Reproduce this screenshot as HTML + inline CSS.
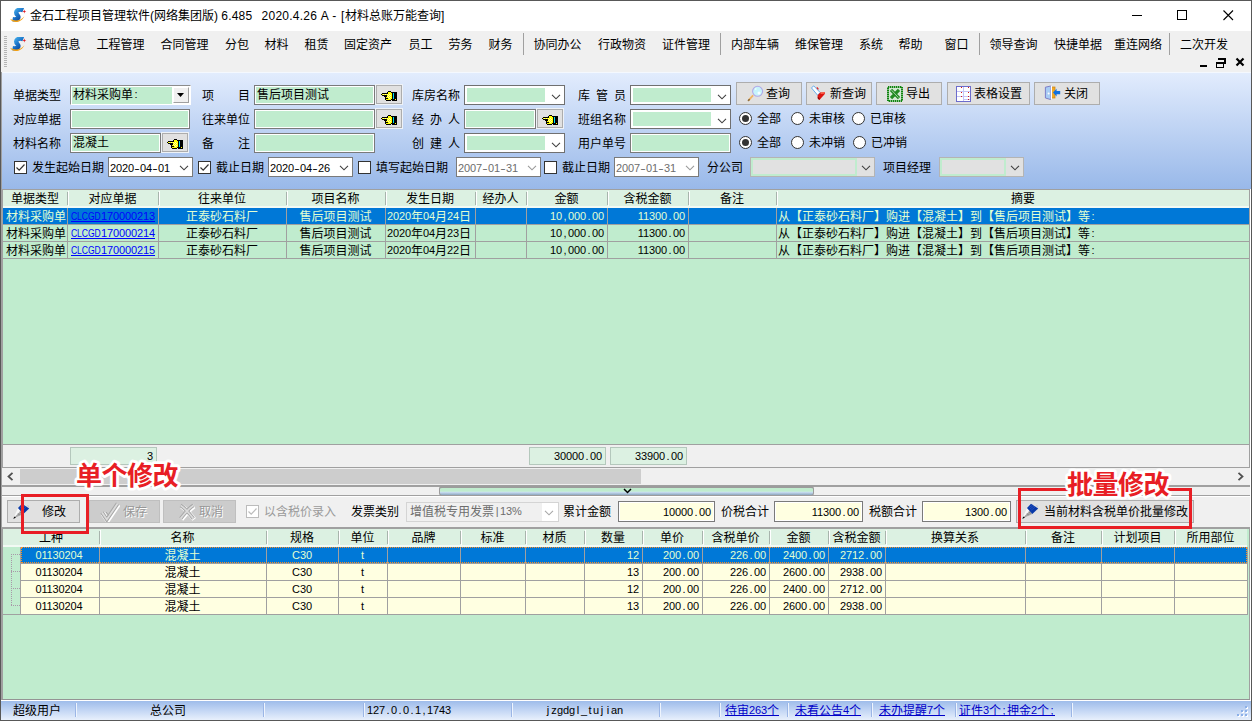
<!DOCTYPE html><html lang="zh-CN"><head><meta charset="utf-8"><title>金石工程项目管理软件</title><style>
html,body{margin:0;padding:0}
body{width:1252px;height:721px;overflow:hidden;position:relative;background:#f0f0f0;
 font-family:"Liberation Sans","Noto Sans CJK SC",sans-serif;font-size:12px;color:#000;line-height:14px}
div,span,a,svg{position:absolute;white-space:nowrap;box-sizing:border-box}
span.i{position:static}
.n{font-size:11px;letter-spacing:-.12px}
span.u{position:relative;top:-1px}
span.hy{display:inline-block;width:6px;text-align:center;position:static;transform:scaleX(1.5)}
span.p{display:inline-block;width:6px;text-align:center;position:static}
span.cw{display:inline-block;position:relative;height:12px;vertical-align:top}
span.cw>span{left:0;top:0;transform:scaleX(.78);transform-origin:0 0}
.t{height:14px;line-height:14px}
.c{text-align:center}
.r{text-align:right}
.inp{background:#c0ecce;border:1px solid #7a7a7a;box-shadow:inset 1px 1px 0 #fff, inset -1px -1px 0 #fff}
.btn{background:#e1e1e1;border:1px solid #adadad}
.hb{background:#e1e1e1;border:1px solid #adadad;box-shadow:0 0 0 1px #eef2f7}
.lnk{color:#0000ff;text-decoration:underline}
</style></head><body>
<div class="" style="left:0px;top:0px;width:1252px;height:31px;background:#fff"></div>
<div class="t" style="left:30px;top:9px;">金石工程项目管理软件(网络集团版) <span class="i" style="letter-spacing:.2px">6.485</span>&nbsp; <span class="i" style="letter-spacing:.25px;margin-left:2.5px">2020.4.26 A</span> - <span class="i" style="margin-left:1.2px">[</span><span class="i" style="margin-left:.7px">材料总账万能查询]</span></div>
<svg style="left:1126px;top:5px" width="120" height="22" viewBox="0 0 120 22"><g stroke="#000" stroke-width="1" fill="none" shape-rendering="crispEdges"><path d="M6 10.5H16"/><rect x="51.5" y="5.5" width="9" height="9"/></g><path d="M97.5 5.5L107 15M107 5.5L97.5 15" stroke="#000" stroke-width="1.1" fill="none"/></svg>
<svg style="left:9.5px;top:7.5px" width="17" height="16" viewBox="0 0 17 16"><defs><linearGradient id="lg1" x1="0" y1="0" x2="1" y2="1"><stop offset="0" stop-color="#48b4ee"/><stop offset=".5" stop-color="#1c74c8"/><stop offset="1" stop-color="#0c3c8c"/></linearGradient></defs><path d="M13.2 2.2C8.5 0.2 4 3.6 7.4 7C10.2 9.8 7 12 2.6 11.2" fill="none" stroke="url(#lg1)" stroke-width="4.4"/><path d="M.2 10.8C2.5 15.8 11.5 15 14.4 8.2C11.2 12.6 5 13.8 .2 10.8Z" fill="#f5a010"/><path d="M14.3 1.6l.5 1.5 1.5.5-1.5.5-.5 1.5-.5-1.5-1.5-.5 1.5-.5z" fill="#e0202a"/></svg>
<div class="" style="left:0px;top:31px;width:1252px;height:42px;background:#f0f0f0"></div>
<div class="" style="left:4px;top:36px;width:3px;height:32px;background:repeating-linear-gradient(to bottom,#b4b4b4 0,#b4b4b4 1px,#f0f0f0 1px,#f0f0f0 2px)"></div>
<svg style="left:9.5px;top:36.5px" width="17" height="16" viewBox="0 0 17 16"><defs><linearGradient id="lg2" x1="0" y1="0" x2="1" y2="1"><stop offset="0" stop-color="#48b4ee"/><stop offset=".5" stop-color="#1c74c8"/><stop offset="1" stop-color="#0c3c8c"/></linearGradient></defs><path d="M13.2 2.2C8.5 0.2 4 3.6 7.4 7C10.2 9.8 7 12 2.6 11.2" fill="none" stroke="url(#lg2)" stroke-width="4.4"/><path d="M.2 10.8C2.5 15.8 11.5 15 14.4 8.2C11.2 12.6 5 13.8 .2 10.8Z" fill="#f5a010"/><path d="M14.3 1.6l.5 1.5 1.5.5-1.5.5-.5 1.5-.5-1.5-1.5-.5 1.5-.5z" fill="#e0202a"/></svg>
<div class="t" style="left:32.5px;top:38px;">基础信息</div>
<div class="t" style="left:96.5px;top:38px;">工程管理</div>
<div class="t" style="left:160.5px;top:38px;">合同管理</div>
<div class="t" style="left:225px;top:38px;">分包</div>
<div class="t" style="left:264.5px;top:38px;">材料</div>
<div class="t" style="left:304.5px;top:38px;">租赁</div>
<div class="t" style="left:344px;top:38px;">固定资产</div>
<div class="t" style="left:408.5px;top:38px;">员工</div>
<div class="t" style="left:448.5px;top:38px;">劳务</div>
<div class="t" style="left:488.5px;top:38px;">财务</div>
<div class="t" style="left:533.5px;top:38px;">协同办公</div>
<div class="t" style="left:598px;top:38px;">行政物资</div>
<div class="t" style="left:662px;top:38px;">证件管理</div>
<div class="t" style="left:731px;top:38px;">内部车辆</div>
<div class="t" style="left:795px;top:38px;">维保管理</div>
<div class="t" style="left:859px;top:38px;">系统</div>
<div class="t" style="left:898.5px;top:38px;">帮助</div>
<div class="t" style="left:944.5px;top:38px;">窗口</div>
<div class="t" style="left:989.5px;top:38px;">领导查询</div>
<div class="t" style="left:1054px;top:38px;">快捷单据</div>
<div class="t" style="left:1114px;top:38px;">重连网络</div>
<div class="t" style="left:1180px;top:38px;">二次开发</div>
<div class="" style="left:523px;top:33px;width:1px;height:22px;background:#a0a0a0"></div>
<div class="" style="left:720px;top:33px;width:1px;height:22px;background:#a0a0a0"></div>
<div class="" style="left:979px;top:33px;width:1px;height:22px;background:#a0a0a0"></div>
<div class="" style="left:1169px;top:33px;width:1px;height:22px;background:#a0a0a0"></div>
<svg style="left:1196px;top:56px" width="52" height="14" viewBox="0 0 52 14"><g fill="none" stroke="#000" shape-rendering="crispEdges"><path d="M4 10H11" stroke-width="2"/><path d="M22 3H29V8" stroke-width="2"/><rect x="20" y="6" width="7" height="5" stroke-width="1"/><path d="M20 6.5H27" stroke-width="2"/></g><path d="M40.5 2.5L47.5 9.5M47.5 2.5L40.5 9.5" stroke="#000" stroke-width="2.2" fill="none"/></svg>
<div class="" style="left:2px;top:72px;width:1249px;height:118px;background:linear-gradient(to bottom,#e2ecfd 0,#98b8e9 100%);border-top:1px solid #f4f8fe"></div>
<div class="t" style="left:13px;top:89px;">单据类型</div>
<div class="t" style="left:13px;top:113px;">对应单据</div>
<div class="t" style="left:13px;top:137px;">材料名称</div>
<div class="t" style="left:202px;top:89px;">项&#12288;&#12288;目</div>
<div class="t" style="left:202px;top:113px;">往来单位</div>
<div class="t" style="left:202px;top:137px;">备&#12288;&#12288;注</div>
<div class="t" style="left:412px;top:89px;">库房名称</div>
<div class="t" style="left:412px;top:113px;">经<span class="p"> </span>办<span class="p"> </span>人</div>
<div class="t" style="left:412px;top:137px;">创<span class="p"> </span>建<span class="p"> </span>人</div>
<div class="t" style="left:578px;top:89px;">库<span class="p"> </span>管<span class="p"> </span>员</div>
<div class="t" style="left:578px;top:113px;">班组名称</div>
<div class="t" style="left:578px;top:137px;">用户单号</div>
<div class="" style="left:70px;top:85px;width:121px;height:20px;background:#c0ecce;border:1px solid;border-color:#8c8c8c #fff #fff #8c8c8c;box-shadow:inset 1px 1px 0 #fff"></div>
<div class="t" style="left:73px;top:88px;">材料采购单<span class="n u"><span class="p">:</span></span></div>
<div class="" style="left:172px;top:86px;width:18px;height:18px;background:#fff"></div>
<div class="" style="left:173px;top:87px;width:16px;height:16px;background:#f0f0f0;border:1px solid;border-color:#fff #a0a0a0 #a0a0a0 #fff"></div>
<svg style="left:177px;top:93px" width="7" height="4" viewBox="0 0 7 4"><path d="M0 0H7L3.5 4Z" fill="#000"/></svg>
<div class="inp" style="left:70px;top:109px;width:120px;height:20px;"></div>
<div class="inp" style="left:70px;top:133px;width:91px;height:20px;"></div>
<div class="t" style="left:73px;top:136px;">混凝土</div>
<div class="hb" style="left:162px;top:133px;width:26px;height:19px;"></div>
<svg style="left:167px;top:139px" width="16" height="10" viewBox="0 0 16 10" shape-rendering="crispEdges"><rect x="7" y="0" width="3" height="1" fill="#000"/><rect x="6" y="1" width="1" height="1" fill="#000"/><rect x="7" y="1" width="3" height="1" fill="#ffff00"/><rect x="10" y="1" width="6" height="1" fill="#000"/><rect x="1" y="2" width="6" height="1" fill="#000"/><rect x="7" y="2" width="4" height="1" fill="#ffff00"/><rect x="11" y="2" width="1" height="1" fill="#000"/><rect x="12" y="2" width="1" height="1" fill="#00e0f0"/><rect x="13" y="2" width="3" height="1" fill="#000"/><rect x="0" y="3" width="1" height="1" fill="#000"/><rect x="1" y="3" width="1" height="1" fill="#ffff00"/><rect x="2" y="3" width="1" height="1" fill="#ffffa0"/><rect x="3" y="3" width="1" height="1" fill="#ffff00"/><rect x="4" y="3" width="1" height="1" fill="#ffffa0"/><rect x="5" y="3" width="1" height="1" fill="#ffff00"/><rect x="6" y="3" width="1" height="1" fill="#ffffa0"/><rect x="7" y="3" width="1" height="1" fill="#ffff00"/><rect x="8" y="3" width="1" height="1" fill="#ffffa0"/><rect x="9" y="3" width="2" height="1" fill="#ffff00"/><rect x="11" y="3" width="1" height="1" fill="#000"/><rect x="12" y="3" width="1" height="1" fill="#00e0f0"/><rect x="13" y="3" width="3" height="1" fill="#000"/><rect x="1" y="4" width="5" height="1" fill="#000"/><rect x="6" y="4" width="1" height="1" fill="#ffff00"/><rect x="7" y="4" width="1" height="1" fill="#ffffa0"/><rect x="8" y="4" width="1" height="1" fill="#ffff00"/><rect x="9" y="4" width="1" height="1" fill="#ffffa0"/><rect x="10" y="4" width="1" height="1" fill="#ffff00"/><rect x="11" y="4" width="1" height="1" fill="#000"/><rect x="12" y="4" width="1" height="1" fill="#00e0f0"/><rect x="13" y="4" width="3" height="1" fill="#000"/><rect x="3" y="5" width="3" height="1" fill="#000"/><rect x="6" y="5" width="1" height="1" fill="#ffffa0"/><rect x="7" y="5" width="1" height="1" fill="#ffff00"/><rect x="8" y="5" width="1" height="1" fill="#ffffa0"/><rect x="9" y="5" width="2" height="1" fill="#ffff00"/><rect x="11" y="5" width="1" height="1" fill="#000"/><rect x="12" y="5" width="1" height="1" fill="#00e0f0"/><rect x="13" y="5" width="3" height="1" fill="#000"/><rect x="4" y="6" width="1" height="1" fill="#000"/><rect x="5" y="6" width="2" height="1" fill="#ffff00"/><rect x="7" y="6" width="1" height="1" fill="#ffffa0"/><rect x="8" y="6" width="1" height="1" fill="#ffff00"/><rect x="9" y="6" width="1" height="1" fill="#ffffa0"/><rect x="10" y="6" width="1" height="1" fill="#ffff00"/><rect x="11" y="6" width="1" height="1" fill="#000"/><rect x="12" y="6" width="1" height="1" fill="#00e0f0"/><rect x="13" y="6" width="3" height="1" fill="#000"/><rect x="4" y="7" width="3" height="1" fill="#000"/><rect x="7" y="7" width="1" height="1" fill="#ffff00"/><rect x="8" y="7" width="1" height="1" fill="#ffffa0"/><rect x="9" y="7" width="2" height="1" fill="#ffff00"/><rect x="11" y="7" width="1" height="1" fill="#000"/><rect x="12" y="7" width="1" height="1" fill="#00e0f0"/><rect x="13" y="7" width="3" height="1" fill="#000"/><rect x="4" y="8" width="1" height="1" fill="#000"/><rect x="5" y="8" width="5" height="1" fill="#ffff00"/><rect x="10" y="8" width="4" height="1" fill="#000"/><rect x="14" y="8" width="1" height="1" fill="#ffff00"/><rect x="15" y="8" width="1" height="1" fill="#000"/><rect x="5" y="9" width="5" height="1" fill="#000"/><rect x="11" y="9" width="5" height="1" fill="#000"/></svg>
<div class="inp" style="left:254px;top:85px;width:121px;height:20px;"></div>
<div class="t" style="left:257px;top:88px;">售后项目测试</div>
<div class="hb" style="left:376px;top:85px;width:26px;height:19px;"></div>
<svg style="left:381px;top:91px" width="16" height="10" viewBox="0 0 16 10" shape-rendering="crispEdges"><rect x="7" y="0" width="3" height="1" fill="#000"/><rect x="6" y="1" width="1" height="1" fill="#000"/><rect x="7" y="1" width="3" height="1" fill="#ffff00"/><rect x="10" y="1" width="6" height="1" fill="#000"/><rect x="1" y="2" width="6" height="1" fill="#000"/><rect x="7" y="2" width="4" height="1" fill="#ffff00"/><rect x="11" y="2" width="1" height="1" fill="#000"/><rect x="12" y="2" width="1" height="1" fill="#00e0f0"/><rect x="13" y="2" width="3" height="1" fill="#000"/><rect x="0" y="3" width="1" height="1" fill="#000"/><rect x="1" y="3" width="1" height="1" fill="#ffff00"/><rect x="2" y="3" width="1" height="1" fill="#ffffa0"/><rect x="3" y="3" width="1" height="1" fill="#ffff00"/><rect x="4" y="3" width="1" height="1" fill="#ffffa0"/><rect x="5" y="3" width="1" height="1" fill="#ffff00"/><rect x="6" y="3" width="1" height="1" fill="#ffffa0"/><rect x="7" y="3" width="1" height="1" fill="#ffff00"/><rect x="8" y="3" width="1" height="1" fill="#ffffa0"/><rect x="9" y="3" width="2" height="1" fill="#ffff00"/><rect x="11" y="3" width="1" height="1" fill="#000"/><rect x="12" y="3" width="1" height="1" fill="#00e0f0"/><rect x="13" y="3" width="3" height="1" fill="#000"/><rect x="1" y="4" width="5" height="1" fill="#000"/><rect x="6" y="4" width="1" height="1" fill="#ffff00"/><rect x="7" y="4" width="1" height="1" fill="#ffffa0"/><rect x="8" y="4" width="1" height="1" fill="#ffff00"/><rect x="9" y="4" width="1" height="1" fill="#ffffa0"/><rect x="10" y="4" width="1" height="1" fill="#ffff00"/><rect x="11" y="4" width="1" height="1" fill="#000"/><rect x="12" y="4" width="1" height="1" fill="#00e0f0"/><rect x="13" y="4" width="3" height="1" fill="#000"/><rect x="3" y="5" width="3" height="1" fill="#000"/><rect x="6" y="5" width="1" height="1" fill="#ffffa0"/><rect x="7" y="5" width="1" height="1" fill="#ffff00"/><rect x="8" y="5" width="1" height="1" fill="#ffffa0"/><rect x="9" y="5" width="2" height="1" fill="#ffff00"/><rect x="11" y="5" width="1" height="1" fill="#000"/><rect x="12" y="5" width="1" height="1" fill="#00e0f0"/><rect x="13" y="5" width="3" height="1" fill="#000"/><rect x="4" y="6" width="1" height="1" fill="#000"/><rect x="5" y="6" width="2" height="1" fill="#ffff00"/><rect x="7" y="6" width="1" height="1" fill="#ffffa0"/><rect x="8" y="6" width="1" height="1" fill="#ffff00"/><rect x="9" y="6" width="1" height="1" fill="#ffffa0"/><rect x="10" y="6" width="1" height="1" fill="#ffff00"/><rect x="11" y="6" width="1" height="1" fill="#000"/><rect x="12" y="6" width="1" height="1" fill="#00e0f0"/><rect x="13" y="6" width="3" height="1" fill="#000"/><rect x="4" y="7" width="3" height="1" fill="#000"/><rect x="7" y="7" width="1" height="1" fill="#ffff00"/><rect x="8" y="7" width="1" height="1" fill="#ffffa0"/><rect x="9" y="7" width="2" height="1" fill="#ffff00"/><rect x="11" y="7" width="1" height="1" fill="#000"/><rect x="12" y="7" width="1" height="1" fill="#00e0f0"/><rect x="13" y="7" width="3" height="1" fill="#000"/><rect x="4" y="8" width="1" height="1" fill="#000"/><rect x="5" y="8" width="5" height="1" fill="#ffff00"/><rect x="10" y="8" width="4" height="1" fill="#000"/><rect x="14" y="8" width="1" height="1" fill="#ffff00"/><rect x="15" y="8" width="1" height="1" fill="#000"/><rect x="5" y="9" width="5" height="1" fill="#000"/><rect x="11" y="9" width="5" height="1" fill="#000"/></svg>
<div class="inp" style="left:254px;top:109px;width:121px;height:20px;"></div>
<div class="hb" style="left:376px;top:109px;width:26px;height:19px;"></div>
<svg style="left:381px;top:115px" width="16" height="10" viewBox="0 0 16 10" shape-rendering="crispEdges"><rect x="7" y="0" width="3" height="1" fill="#000"/><rect x="6" y="1" width="1" height="1" fill="#000"/><rect x="7" y="1" width="3" height="1" fill="#ffff00"/><rect x="10" y="1" width="6" height="1" fill="#000"/><rect x="1" y="2" width="6" height="1" fill="#000"/><rect x="7" y="2" width="4" height="1" fill="#ffff00"/><rect x="11" y="2" width="1" height="1" fill="#000"/><rect x="12" y="2" width="1" height="1" fill="#00e0f0"/><rect x="13" y="2" width="3" height="1" fill="#000"/><rect x="0" y="3" width="1" height="1" fill="#000"/><rect x="1" y="3" width="1" height="1" fill="#ffff00"/><rect x="2" y="3" width="1" height="1" fill="#ffffa0"/><rect x="3" y="3" width="1" height="1" fill="#ffff00"/><rect x="4" y="3" width="1" height="1" fill="#ffffa0"/><rect x="5" y="3" width="1" height="1" fill="#ffff00"/><rect x="6" y="3" width="1" height="1" fill="#ffffa0"/><rect x="7" y="3" width="1" height="1" fill="#ffff00"/><rect x="8" y="3" width="1" height="1" fill="#ffffa0"/><rect x="9" y="3" width="2" height="1" fill="#ffff00"/><rect x="11" y="3" width="1" height="1" fill="#000"/><rect x="12" y="3" width="1" height="1" fill="#00e0f0"/><rect x="13" y="3" width="3" height="1" fill="#000"/><rect x="1" y="4" width="5" height="1" fill="#000"/><rect x="6" y="4" width="1" height="1" fill="#ffff00"/><rect x="7" y="4" width="1" height="1" fill="#ffffa0"/><rect x="8" y="4" width="1" height="1" fill="#ffff00"/><rect x="9" y="4" width="1" height="1" fill="#ffffa0"/><rect x="10" y="4" width="1" height="1" fill="#ffff00"/><rect x="11" y="4" width="1" height="1" fill="#000"/><rect x="12" y="4" width="1" height="1" fill="#00e0f0"/><rect x="13" y="4" width="3" height="1" fill="#000"/><rect x="3" y="5" width="3" height="1" fill="#000"/><rect x="6" y="5" width="1" height="1" fill="#ffffa0"/><rect x="7" y="5" width="1" height="1" fill="#ffff00"/><rect x="8" y="5" width="1" height="1" fill="#ffffa0"/><rect x="9" y="5" width="2" height="1" fill="#ffff00"/><rect x="11" y="5" width="1" height="1" fill="#000"/><rect x="12" y="5" width="1" height="1" fill="#00e0f0"/><rect x="13" y="5" width="3" height="1" fill="#000"/><rect x="4" y="6" width="1" height="1" fill="#000"/><rect x="5" y="6" width="2" height="1" fill="#ffff00"/><rect x="7" y="6" width="1" height="1" fill="#ffffa0"/><rect x="8" y="6" width="1" height="1" fill="#ffff00"/><rect x="9" y="6" width="1" height="1" fill="#ffffa0"/><rect x="10" y="6" width="1" height="1" fill="#ffff00"/><rect x="11" y="6" width="1" height="1" fill="#000"/><rect x="12" y="6" width="1" height="1" fill="#00e0f0"/><rect x="13" y="6" width="3" height="1" fill="#000"/><rect x="4" y="7" width="3" height="1" fill="#000"/><rect x="7" y="7" width="1" height="1" fill="#ffff00"/><rect x="8" y="7" width="1" height="1" fill="#ffffa0"/><rect x="9" y="7" width="2" height="1" fill="#ffff00"/><rect x="11" y="7" width="1" height="1" fill="#000"/><rect x="12" y="7" width="1" height="1" fill="#00e0f0"/><rect x="13" y="7" width="3" height="1" fill="#000"/><rect x="4" y="8" width="1" height="1" fill="#000"/><rect x="5" y="8" width="5" height="1" fill="#ffff00"/><rect x="10" y="8" width="4" height="1" fill="#000"/><rect x="14" y="8" width="1" height="1" fill="#ffff00"/><rect x="15" y="8" width="1" height="1" fill="#000"/><rect x="5" y="9" width="5" height="1" fill="#000"/><rect x="11" y="9" width="5" height="1" fill="#000"/></svg>
<div class="inp" style="left:254px;top:133px;width:121px;height:20px;"></div>
<div class="" style="left:464px;top:85px;width:101px;height:20px;background:#fff;border:1px solid #707070"></div>
<div class="" style="left:467px;top:88px;width:78px;height:14px;background:#c0ecce"></div>
<svg style="left:551px;top:93.5px" width="10" height="6" viewBox="0 0 10 6"><path d="M1 .8L5 4.8L9 .8" fill="none" stroke="#404040" stroke-width="1.1"/></svg>
<div class="inp" style="left:464px;top:109px;width:72px;height:20px;"></div>
<div class="hb" style="left:537px;top:109px;width:26px;height:19px;"></div>
<svg style="left:542px;top:115px" width="16" height="10" viewBox="0 0 16 10" shape-rendering="crispEdges"><rect x="7" y="0" width="3" height="1" fill="#000"/><rect x="6" y="1" width="1" height="1" fill="#000"/><rect x="7" y="1" width="3" height="1" fill="#ffff00"/><rect x="10" y="1" width="6" height="1" fill="#000"/><rect x="1" y="2" width="6" height="1" fill="#000"/><rect x="7" y="2" width="4" height="1" fill="#ffff00"/><rect x="11" y="2" width="1" height="1" fill="#000"/><rect x="12" y="2" width="1" height="1" fill="#00e0f0"/><rect x="13" y="2" width="3" height="1" fill="#000"/><rect x="0" y="3" width="1" height="1" fill="#000"/><rect x="1" y="3" width="1" height="1" fill="#ffff00"/><rect x="2" y="3" width="1" height="1" fill="#ffffa0"/><rect x="3" y="3" width="1" height="1" fill="#ffff00"/><rect x="4" y="3" width="1" height="1" fill="#ffffa0"/><rect x="5" y="3" width="1" height="1" fill="#ffff00"/><rect x="6" y="3" width="1" height="1" fill="#ffffa0"/><rect x="7" y="3" width="1" height="1" fill="#ffff00"/><rect x="8" y="3" width="1" height="1" fill="#ffffa0"/><rect x="9" y="3" width="2" height="1" fill="#ffff00"/><rect x="11" y="3" width="1" height="1" fill="#000"/><rect x="12" y="3" width="1" height="1" fill="#00e0f0"/><rect x="13" y="3" width="3" height="1" fill="#000"/><rect x="1" y="4" width="5" height="1" fill="#000"/><rect x="6" y="4" width="1" height="1" fill="#ffff00"/><rect x="7" y="4" width="1" height="1" fill="#ffffa0"/><rect x="8" y="4" width="1" height="1" fill="#ffff00"/><rect x="9" y="4" width="1" height="1" fill="#ffffa0"/><rect x="10" y="4" width="1" height="1" fill="#ffff00"/><rect x="11" y="4" width="1" height="1" fill="#000"/><rect x="12" y="4" width="1" height="1" fill="#00e0f0"/><rect x="13" y="4" width="3" height="1" fill="#000"/><rect x="3" y="5" width="3" height="1" fill="#000"/><rect x="6" y="5" width="1" height="1" fill="#ffffa0"/><rect x="7" y="5" width="1" height="1" fill="#ffff00"/><rect x="8" y="5" width="1" height="1" fill="#ffffa0"/><rect x="9" y="5" width="2" height="1" fill="#ffff00"/><rect x="11" y="5" width="1" height="1" fill="#000"/><rect x="12" y="5" width="1" height="1" fill="#00e0f0"/><rect x="13" y="5" width="3" height="1" fill="#000"/><rect x="4" y="6" width="1" height="1" fill="#000"/><rect x="5" y="6" width="2" height="1" fill="#ffff00"/><rect x="7" y="6" width="1" height="1" fill="#ffffa0"/><rect x="8" y="6" width="1" height="1" fill="#ffff00"/><rect x="9" y="6" width="1" height="1" fill="#ffffa0"/><rect x="10" y="6" width="1" height="1" fill="#ffff00"/><rect x="11" y="6" width="1" height="1" fill="#000"/><rect x="12" y="6" width="1" height="1" fill="#00e0f0"/><rect x="13" y="6" width="3" height="1" fill="#000"/><rect x="4" y="7" width="3" height="1" fill="#000"/><rect x="7" y="7" width="1" height="1" fill="#ffff00"/><rect x="8" y="7" width="1" height="1" fill="#ffffa0"/><rect x="9" y="7" width="2" height="1" fill="#ffff00"/><rect x="11" y="7" width="1" height="1" fill="#000"/><rect x="12" y="7" width="1" height="1" fill="#00e0f0"/><rect x="13" y="7" width="3" height="1" fill="#000"/><rect x="4" y="8" width="1" height="1" fill="#000"/><rect x="5" y="8" width="5" height="1" fill="#ffff00"/><rect x="10" y="8" width="4" height="1" fill="#000"/><rect x="14" y="8" width="1" height="1" fill="#ffff00"/><rect x="15" y="8" width="1" height="1" fill="#000"/><rect x="5" y="9" width="5" height="1" fill="#000"/><rect x="11" y="9" width="5" height="1" fill="#000"/></svg>
<div class="" style="left:464px;top:133px;width:101px;height:20px;background:#fff;border:1px solid #707070"></div>
<div class="" style="left:467px;top:136px;width:78px;height:14px;background:#c0ecce"></div>
<svg style="left:551px;top:141.5px" width="10" height="6" viewBox="0 0 10 6"><path d="M1 .8L5 4.8L9 .8" fill="none" stroke="#404040" stroke-width="1.1"/></svg>
<div class="" style="left:630px;top:85px;width:101px;height:20px;background:#fff;border:1px solid #707070"></div>
<div class="" style="left:633px;top:88px;width:78px;height:14px;background:#c0ecce"></div>
<svg style="left:717px;top:93.5px" width="10" height="6" viewBox="0 0 10 6"><path d="M1 .8L5 4.8L9 .8" fill="none" stroke="#404040" stroke-width="1.1"/></svg>
<div class="" style="left:630px;top:109px;width:101px;height:20px;background:#fff;border:1px solid #707070"></div>
<div class="" style="left:633px;top:112px;width:78px;height:14px;background:#c0ecce"></div>
<svg style="left:717px;top:117.5px" width="10" height="6" viewBox="0 0 10 6"><path d="M1 .8L5 4.8L9 .8" fill="none" stroke="#404040" stroke-width="1.1"/></svg>
<div class="inp" style="left:630px;top:133px;width:101px;height:20px;"></div>
<div class="btn" style="left:736px;top:82px;width:66px;height:23px;"></div>
<div class="t" style="left:766px;top:87px;">查询</div>
<svg style="left:746px;top:84px" width="18" height="18" viewBox="0 0 18 18"><path d="M6.6 11.8L3 15.8" stroke="#f0b464" stroke-width="1.8" stroke-linecap="round"/><path d="M3.2 15.6L2.4 16.5" stroke="#907040" stroke-width="1.6" stroke-linecap="round"/><circle cx="11.6" cy="7.3" r="5" fill="#c6f3fb" stroke="#b0a8e8" stroke-width="1.1"/><circle cx="13" cy="9" r="1.5" fill="#f4feff"/><circle cx="9.6" cy="5" r="1" fill="#e8fcff"/></svg>
<div class="btn" style="left:806px;top:82px;width:66px;height:23px;"></div>
<div class="t" style="left:830px;top:87px;">新查询</div>
<svg style="left:809px;top:84px" width="18" height="18" viewBox="0 0 18 18"><path d="M2.4 3.8L4.8 1.9L11.2 8.6L8.6 11.2Z" fill="#fbfdff" stroke="#68acec" stroke-width="1"/><path d="M8.6 11.2L11.2 8.6L16 8.2L15.8 10L10.4 15.9L8.8 14.6Z" fill="#dc1410"/><path d="M11.2 8.6L16 8.2L15.6 9.6L11.8 9.9Z" fill="#ff6a50"/><path d="M10.4 15.9L8.8 14.6L8.7 12.5L10.6 14.2Z" fill="#900000"/><path d="M7.8 3.4L9.4 5.4" stroke="#e02020" stroke-width="1.3"/></svg>
<div class="btn" style="left:876px;top:82px;width:66px;height:23px;"></div>
<div class="t" style="left:906px;top:87px;">导出</div>
<svg style="left:887px;top:86px" width="16" height="16" viewBox="0 0 16 16"><rect x="1" y="1" width="14" height="14" fill="#d4e8d4" stroke="#108410" stroke-width="2" stroke-dasharray="1.4 .6"/><path d="M4 3.8L12 12.2M12 3.8L4 12.2" stroke="#218a21" stroke-width="3.2"/><path d="M4.6 4.2L11.4 11.6" stroke="#d8ecd8" stroke-width=".7"/></svg>
<div class="btn" style="left:947px;top:82px;width:83px;height:23px;"></div>
<div class="t" style="left:974px;top:87px;">表格设置</div>
<svg style="left:956px;top:86px" width="15" height="16" viewBox="0 0 15 16" shape-rendering="crispEdges"><rect x=".5" y=".5" width="14" height="15" fill="#fff" stroke="#6c6ccc"/><path d="M7.5 1V15M1 5.5H14M1 10.5H14M8 13.5H14" stroke="#c4c4f6" fill="none"/><g fill="#d01818"><rect x="5" y="1" width="1" height="1"/><rect x="12" y="1" width="1" height="1"/><rect x="5" y="6" width="1" height="1"/><rect x="12" y="6" width="1" height="1"/><rect x="5" y="10" width="1" height="1"/><rect x="12" y="10" width="1" height="1"/><rect x="12" y="13" width="1" height="1"/></g></svg>
<div class="btn" style="left:1034px;top:82px;width:66px;height:23px;"></div>
<div class="t" style="left:1064px;top:87px;">关闭</div>
<svg style="left:1044px;top:85px" width="18" height="16" viewBox="0 0 18 16"><rect x="7.5" y="2" width="3.5" height="11" fill="#f0a828" stroke="#c88010" stroke-width=".7"/><path d="M1.4 2.2L6.8 1V14.6L1.4 13Z" fill="#a8ccf4" stroke="#7474c4" stroke-width=".9"/><path d="M7.4 1V14.6" stroke="#fff" stroke-width="1.2"/><circle cx="4.6" cy="8.6" r="1" fill="#fff"/><path d="M9 7.6L12.6 3.8V5.9H16.2V9.3H12.6V11.4Z" fill="#1070e0"/></svg>
<div class="" style="left:739px;top:112px;width:13px;height:13px;background:#fff;border:1px solid #333;border-radius:50%"></div>
<div class="" style="left:742px;top:115px;width:7px;height:7px;background:#333;border-radius:50%"></div>
<div class="t" style="left:757px;top:111.5px;">全部</div>
<div class="" style="left:791px;top:112px;width:13px;height:13px;background:#fff;border:1px solid #333;border-radius:50%"></div>
<div class="t" style="left:809px;top:111.5px;">未审核</div>
<div class="" style="left:852px;top:112px;width:13px;height:13px;background:#fff;border:1px solid #333;border-radius:50%"></div>
<div class="t" style="left:870px;top:111.5px;">已审核</div>
<div class="" style="left:739px;top:136px;width:13px;height:13px;background:#fff;border:1px solid #333;border-radius:50%"></div>
<div class="" style="left:742px;top:139px;width:7px;height:7px;background:#333;border-radius:50%"></div>
<div class="t" style="left:757px;top:135.5px;">全部</div>
<div class="" style="left:791px;top:136px;width:13px;height:13px;background:#fff;border:1px solid #333;border-radius:50%"></div>
<div class="t" style="left:809px;top:135.5px;">未冲销</div>
<div class="" style="left:853px;top:136px;width:13px;height:13px;background:#fff;border:1px solid #333;border-radius:50%"></div>
<div class="t" style="left:871px;top:135.5px;">已冲销</div>
<div class="" style="left:14px;top:161px;width:13px;height:13px;background:#fff;border:1px solid #333"></div>
<svg style="left:14px;top:161px" width="13" height="13" viewBox="0 0 13 13"><path d="M2.5 6.5L5.2 9.2L10.5 3.5" fill="none" stroke="#333" stroke-width="1.2"/></svg>
<div class="t" style="left:32px;top:161px;">发生起始日期</div>
<div class="" style="left:108px;top:157px;width:85px;height:20px;background:#fff;border:1px solid #7a7a7a"></div>
<div class="t n" style="left:110px;top:160.5px;">2020<span class="hy">-</span>04<span class="hy">-</span>01</div>
<svg style="left:179px;top:165px" width="10" height="6" viewBox="0 0 10 6"><path d="M1 .8L5 4.8L9 .8" fill="none" stroke="#404040" stroke-width="1.1"/></svg>
<div class="" style="left:198px;top:161px;width:13px;height:13px;background:#fff;border:1px solid #333"></div>
<svg style="left:198px;top:161px" width="13" height="13" viewBox="0 0 13 13"><path d="M2.5 6.5L5.2 9.2L10.5 3.5" fill="none" stroke="#333" stroke-width="1.2"/></svg>
<div class="t" style="left:216px;top:161px;">截止日期</div>
<div class="" style="left:268px;top:157px;width:85px;height:20px;background:#fff;border:1px solid #7a7a7a"></div>
<div class="t n" style="left:270px;top:160.5px;">2020<span class="hy">-</span>04<span class="hy">-</span>26</div>
<svg style="left:339px;top:165px" width="10" height="6" viewBox="0 0 10 6"><path d="M1 .8L5 4.8L9 .8" fill="none" stroke="#404040" stroke-width="1.1"/></svg>
<div class="" style="left:358px;top:161px;width:13px;height:13px;background:#fff;border:1px solid #333"></div>
<div class="t" style="left:376px;top:161px;">填写起始日期</div>
<div class="" style="left:456px;top:157px;width:85px;height:20px;background:#fff;border:1px solid #7a7a7a"></div>
<div class="t n" style="left:458px;top:160.5px;color:#6d6d6d">2007<span class="hy">-</span>01<span class="hy">-</span>31</div>
<svg style="left:527px;top:165px" width="10" height="6" viewBox="0 0 10 6"><path d="M1 .8L5 4.8L9 .8" fill="none" stroke="#9a9a9a" stroke-width="1.1"/></svg>
<div class="" style="left:544px;top:161px;width:13px;height:13px;background:#fff;border:1px solid #333"></div>
<div class="t" style="left:562px;top:161px;">截止日期</div>
<div class="" style="left:614px;top:157px;width:85px;height:20px;background:#fff;border:1px solid #7a7a7a"></div>
<div class="t n" style="left:616px;top:160.5px;color:#6d6d6d">2007<span class="hy">-</span>01<span class="hy">-</span>31</div>
<svg style="left:685px;top:165px" width="10" height="6" viewBox="0 0 10 6"><path d="M1 .8L5 4.8L9 .8" fill="none" stroke="#9a9a9a" stroke-width="1.1"/></svg>
<div class="t" style="left:707px;top:161px;">分公司</div>
<div class="" style="left:750px;top:157px;width:125px;height:20px;background:#e1e1e1;border:1px solid #b4b4b4"></div>
<div class="" style="left:751px;top:158px;width:106px;height:18px;border:2px solid #c0ecce"></div>
<svg style="left:861px;top:165px" width="10" height="6" viewBox="0 0 10 6"><path d="M1 .8L5 4.8L9 .8" fill="none" stroke="#404040" stroke-width="1.1"/></svg>
<div class="t" style="left:883px;top:161px;">项目经理</div>
<div class="" style="left:939px;top:157px;width:85px;height:20px;background:#e1e1e1;border:1px solid #b4b4b4"></div>
<div class="" style="left:940px;top:158px;width:66px;height:18px;border:2px solid #c0ecce"></div>
<svg style="left:1010px;top:165px" width="10" height="6" viewBox="0 0 10 6"><path d="M1 .8L5 4.8L9 .8" fill="none" stroke="#404040" stroke-width="1.1"/></svg>
<div class="" style="left:2px;top:189px;width:1248px;height:279px;background:#c0ecce;border:1px solid #a0a0a0"></div>
<div class="" style="left:3px;top:190px;width:1246px;height:16px;background:#dcf1e2"></div>
<div class="" style="left:3px;top:206px;width:1246px;height:2px;background:#f2faf4"></div>
<div class="" style="left:67px;top:192px;width:1px;height:13px;background:#a8b4ac"></div>
<div class="" style="left:68px;top:191px;width:1px;height:15px;background:#fff"></div>
<div class="t c" style="left:3px;top:192px;width:64px;">单据类型</div>
<div class="" style="left:158px;top:192px;width:1px;height:13px;background:#a8b4ac"></div>
<div class="" style="left:159px;top:191px;width:1px;height:15px;background:#fff"></div>
<div class="t c" style="left:67px;top:192px;width:91px;">对应单据</div>
<div class="" style="left:286px;top:192px;width:1px;height:13px;background:#a8b4ac"></div>
<div class="" style="left:287px;top:191px;width:1px;height:15px;background:#fff"></div>
<div class="t c" style="left:158px;top:192px;width:128px;">往来单位</div>
<div class="" style="left:385px;top:192px;width:1px;height:13px;background:#a8b4ac"></div>
<div class="" style="left:386px;top:191px;width:1px;height:15px;background:#fff"></div>
<div class="t c" style="left:286px;top:192px;width:99px;">项目名称</div>
<div class="" style="left:475px;top:192px;width:1px;height:13px;background:#a8b4ac"></div>
<div class="" style="left:476px;top:191px;width:1px;height:15px;background:#fff"></div>
<div class="t c" style="left:385px;top:192px;width:90px;">发生日期</div>
<div class="" style="left:526px;top:192px;width:1px;height:13px;background:#a8b4ac"></div>
<div class="" style="left:527px;top:191px;width:1px;height:15px;background:#fff"></div>
<div class="t c" style="left:475px;top:192px;width:51px;">经办人</div>
<div class="" style="left:607px;top:192px;width:1px;height:13px;background:#a8b4ac"></div>
<div class="" style="left:608px;top:191px;width:1px;height:15px;background:#fff"></div>
<div class="t c" style="left:526px;top:192px;width:81px;">金额</div>
<div class="" style="left:688px;top:192px;width:1px;height:13px;background:#a8b4ac"></div>
<div class="" style="left:689px;top:191px;width:1px;height:15px;background:#fff"></div>
<div class="t c" style="left:607px;top:192px;width:81px;">含税金额</div>
<div class="" style="left:776px;top:192px;width:1px;height:13px;background:#a8b4ac"></div>
<div class="" style="left:777px;top:191px;width:1px;height:15px;background:#fff"></div>
<div class="t c" style="left:688px;top:192px;width:88px;">备注</div>
<div class="t c" style="left:776px;top:192px;width:494px;">摘要</div>
<div class="" style="left:3px;top:208px;width:1246px;height:16px;background:#0078d7"></div>
<div class="" style="left:3px;top:224px;width:1246px;height:1px;background:#a0a0a0"></div>
<div class="" style="left:67px;top:208px;width:1px;height:17px;background:#a0a0a0"></div>
<div class="" style="left:158px;top:208px;width:1px;height:17px;background:#a0a0a0"></div>
<div class="" style="left:286px;top:208px;width:1px;height:17px;background:#a0a0a0"></div>
<div class="" style="left:385px;top:208px;width:1px;height:17px;background:#a0a0a0"></div>
<div class="" style="left:475px;top:208px;width:1px;height:17px;background:#a0a0a0"></div>
<div class="" style="left:526px;top:208px;width:1px;height:17px;background:#a0a0a0"></div>
<div class="" style="left:607px;top:208px;width:1px;height:17px;background:#a0a0a0"></div>
<div class="" style="left:688px;top:208px;width:1px;height:17px;background:#a0a0a0"></div>
<div class="" style="left:776px;top:208px;width:1px;height:17px;background:#a0a0a0"></div>
<div class="t" style="left:6px;top:210px;color:#e2ffd2;">材料采购单</div>
<div class="t" style="left:71px;top:209px;"><span class="cw" style="width:30px"><span class="n lnk">CLCGD</span></span><span class="i n lnk">170000213</span></div>
<div class="" style="left:71px;top:221px;width:84px;height:1px;background:#0000ff"></div>
<div class="t c" style="left:158px;top:210px;width:128px;color:#e2ffd2;">正泰砂石料厂</div>
<div class="t c" style="left:286px;top:210px;width:99px;color:#e2ffd2;">售后项目测试</div>
<div class="t" style="left:387px;top:210px;color:#e2ffd2;"><span class="n u">2020</span>年<span class="n u">04</span>月<span class="n u">24</span>日</div>
<div class="t n r" style="left:526px;top:209px;width:78px;color:#e2ffd2;">10<span class="p">,</span>000<span class="p">.</span>00</div>
<div class="t n r" style="left:607px;top:209px;width:78px;color:#e2ffd2;">11300<span class="p">.</span>00</div>
<div class="t" style="left:778px;top:210px;color:#e2ffd2;">从【正泰砂石料厂】购进【混凝土】到【售后项目测试】等<span class="n u"><span class="p">:</span></span></div>
<div class="" style="left:3px;top:225px;width:1246px;height:16px;background:#c0ecce"></div>
<div class="" style="left:3px;top:241px;width:1246px;height:1px;background:#a0a0a0"></div>
<div class="" style="left:67px;top:225px;width:1px;height:17px;background:#a0a0a0"></div>
<div class="" style="left:158px;top:225px;width:1px;height:17px;background:#a0a0a0"></div>
<div class="" style="left:286px;top:225px;width:1px;height:17px;background:#a0a0a0"></div>
<div class="" style="left:385px;top:225px;width:1px;height:17px;background:#a0a0a0"></div>
<div class="" style="left:475px;top:225px;width:1px;height:17px;background:#a0a0a0"></div>
<div class="" style="left:526px;top:225px;width:1px;height:17px;background:#a0a0a0"></div>
<div class="" style="left:607px;top:225px;width:1px;height:17px;background:#a0a0a0"></div>
<div class="" style="left:688px;top:225px;width:1px;height:17px;background:#a0a0a0"></div>
<div class="" style="left:776px;top:225px;width:1px;height:17px;background:#a0a0a0"></div>
<div class="t" style="left:6px;top:227px;">材料采购单</div>
<div class="t" style="left:71px;top:226px;"><span class="cw" style="width:30px"><span class="n lnk">CLCGD</span></span><span class="i n lnk">170000214</span></div>
<div class="" style="left:71px;top:238px;width:84px;height:1px;background:#0000ff"></div>
<div class="t c" style="left:158px;top:227px;width:128px;">正泰砂石料厂</div>
<div class="t c" style="left:286px;top:227px;width:99px;">售后项目测试</div>
<div class="t" style="left:387px;top:227px;"><span class="n u">2020</span>年<span class="n u">04</span>月<span class="n u">23</span>日</div>
<div class="t n r" style="left:526px;top:226px;width:78px;">10<span class="p">,</span>000<span class="p">.</span>00</div>
<div class="t n r" style="left:607px;top:226px;width:78px;">11300<span class="p">.</span>00</div>
<div class="t" style="left:778px;top:227px;">从【正泰砂石料厂】购进【混凝土】到【售后项目测试】等<span class="n u"><span class="p">:</span></span></div>
<div class="" style="left:3px;top:242px;width:1246px;height:16px;background:#c0ecce"></div>
<div class="" style="left:3px;top:258px;width:1246px;height:1px;background:#a0a0a0"></div>
<div class="" style="left:67px;top:242px;width:1px;height:17px;background:#a0a0a0"></div>
<div class="" style="left:158px;top:242px;width:1px;height:17px;background:#a0a0a0"></div>
<div class="" style="left:286px;top:242px;width:1px;height:17px;background:#a0a0a0"></div>
<div class="" style="left:385px;top:242px;width:1px;height:17px;background:#a0a0a0"></div>
<div class="" style="left:475px;top:242px;width:1px;height:17px;background:#a0a0a0"></div>
<div class="" style="left:526px;top:242px;width:1px;height:17px;background:#a0a0a0"></div>
<div class="" style="left:607px;top:242px;width:1px;height:17px;background:#a0a0a0"></div>
<div class="" style="left:688px;top:242px;width:1px;height:17px;background:#a0a0a0"></div>
<div class="" style="left:776px;top:242px;width:1px;height:17px;background:#a0a0a0"></div>
<div class="t" style="left:6px;top:244px;">材料采购单</div>
<div class="t" style="left:71px;top:243px;"><span class="cw" style="width:30px"><span class="n lnk">CLCGD</span></span><span class="i n lnk">170000215</span></div>
<div class="" style="left:71px;top:255px;width:84px;height:1px;background:#0000ff"></div>
<div class="t c" style="left:158px;top:244px;width:128px;">正泰砂石料厂</div>
<div class="t c" style="left:286px;top:244px;width:99px;">售后项目测试</div>
<div class="t" style="left:387px;top:244px;"><span class="n u">2020</span>年<span class="n u">04</span>月<span class="n u">22</span>日</div>
<div class="t n r" style="left:526px;top:243px;width:78px;">10<span class="p">,</span>000<span class="p">.</span>00</div>
<div class="t n r" style="left:607px;top:243px;width:78px;">11300<span class="p">.</span>00</div>
<div class="t" style="left:778px;top:244px;">从【正泰砂石料厂】购进【混凝土】到【售后项目测试】等<span class="n u"><span class="p">:</span></span></div>
<div class="" style="left:3px;top:444px;width:1246px;height:24px;background:#f0f0f0;border-top:1px solid #a0a0a0;border-bottom:1px solid #a0a0a0"></div>
<div class="" style="left:70px;top:447px;width:87px;height:18px;background:#dcf1e2;border:1px solid #b4c8bc"></div>
<div class="t n r" style="left:70px;top:449px;width:83px;">3</div>
<div class="" style="left:529px;top:447px;width:77px;height:18px;background:#dcf1e2;border:1px solid #b4c8bc"></div>
<div class="t n r" style="left:529px;top:449px;width:73px;">30000<span class="p">.</span>00</div>
<div class="" style="left:610px;top:447px;width:77px;height:18px;background:#dcf1e2;border:1px solid #b4c8bc"></div>
<div class="t n r" style="left:610px;top:449px;width:73px;">33900<span class="p">.</span>00</div>
<div class="" style="left:3px;top:468px;width:1246px;height:17px;background:#f0f0f0"></div>
<div class="" style="left:20px;top:469px;width:621px;height:15px;background:#cdcdcd"></div>
<svg style="left:7px;top:472px" width="7" height="9" viewBox="0 0 7 9"><path d="M5.5 .8L1.5 4.5L5.5 8.2" fill="none" stroke="#505050" stroke-width="1.8"/></svg>
<svg style="left:1237px;top:472px" width="7" height="9" viewBox="0 0 7 9"><path d="M1.5 .8L5.5 4.5L1.5 8.2" fill="none" stroke="#505050" stroke-width="1.8"/></svg>
<div class="" style="left:2px;top:485px;width:1248px;height:2px;background:#a0a0a0"></div>
<div class="" style="left:2px;top:487px;width:1248px;height:8px;background:#f0f0f0"></div>
<div class="" style="left:2px;top:495px;width:1248px;height:1px;background:#a0a0a0"></div>
<div class="" style="left:2px;top:496px;width:1248px;height:1px;background:#fff"></div>
<div class="" style="left:439px;top:486px;width:375px;height:10px;background:linear-gradient(to bottom,#c0ecce 0,#c0ecce 48%,#d0e4f8 55%,#8ea8c0 100%);border:2px solid #9c9c9c;border-width:2px 1px 1px 1px;border-radius:3px"></div>
<svg style="left:623px;top:488px" width="9" height="6" viewBox="0 0 9 6"><path d="M1 1L4.5 4.5L8 1" fill="none" stroke="#000" stroke-width="1.5"/></svg>
<div class="" style="left:2px;top:497px;width:1248px;height:30px;background:#f0f0f0"></div>
<div class="" style="left:2px;top:527px;width:1248px;height:2px;background:#a0a0a0"></div>
<div class="btn" style="left:7px;top:500px;width:73px;height:23px;"></div>
<svg style="left:12px;top:503px" width="18" height="17" viewBox="0 0 18 17"><path d="M6 5L8.6 8L1.3 15.6Z" fill="#f8f8f8"/><path d="M8.6 8L11.3 11L1.3 15.6Z" fill="#a4a4a4"/><path d="M8 8.6L9.6 10.4M6 10.4L7.6 12.2" stroke="#707070" stroke-width=".7"/><path d="M1.1 15.8L2.6 13.4L3.9 14.7Z" fill="#000"/><path d="M10 .7L17.2 5.5L11.3 11L6 5Z" fill="#0838a8"/><path d="M7.6 5L11.6 1.9M8.8 6.2L12.9 3M10 7.4L14.2 4" stroke="#3c62cc" stroke-width=".5" fill="none"/><path d="M15.6 2L16.8 4.6" stroke="#c8c8c8" stroke-width="1"/></svg>
<div class="t" style="left:42px;top:505px;">修改</div>
<div class="" style="left:89px;top:500px;width:71px;height:23px;background:#cccccc;border:1px solid #bfbfbf"></div>
<div class="" style="left:163px;top:500px;width:73px;height:23px;background:#cccccc;border:1px solid #bfbfbf"></div>
<svg style="left:100px;top:501px" width="20" height="21" viewBox="0 0 20 21"><path d="M2 11.5L6.8 18.5L17.6 2.6" fill="none" stroke="#fff" stroke-width="5" transform="translate(.8 .8)"/><path d="M2 11.5L6.8 18.5L17.6 2.6" fill="none" stroke="#a6a6a6" stroke-width="3.8"/><path d="M2 11.5L6.8 18.5L17.6 2.6" fill="none" stroke="#dcdcdc" stroke-width="1.8"/><path d="M6.2 11L8.6 14.4" fill="none" stroke="#a6a6a6" stroke-width="1"/></svg>
<div class="t" style="left:123px;top:505px;color:#989898;text-shadow:1px 1px 0 #fff">保存</div>
<svg style="left:178px;top:503px" width="18" height="18" viewBox="0 0 18 18"><path d="M2.6 2.4C7 5 11 10 15.4 15.6M15.4 2.4C11 5 7 10 2.6 15.6" fill="none" stroke="#fff" stroke-width="4.6" transform="translate(.8 .8)"/><path d="M2.6 2.4C7 5 11 10 15.4 15.6M15.4 2.4C11 5 7 10 2.6 15.6" fill="none" stroke="#a6a6a6" stroke-width="3.6"/><path d="M2.6 2.4C7 5 11 10 15.4 15.6M15.4 2.4C11 5 7 10 2.6 15.6" fill="none" stroke="#dcdcdc" stroke-width="1.7"/></svg>
<div class="t" style="left:199px;top:505px;color:#989898;text-shadow:1px 1px 0 #fff">取消</div>
<div class="" style="left:246px;top:505px;width:13px;height:13px;background:#fff;border:1px solid #bcbcbc"></div>
<svg style="left:246px;top:505px" width="13" height="13" viewBox="0 0 13 13"><path d="M2.5 6.5L5.2 9.2L10.5 3.5" fill="none" stroke="#bcbcbc" stroke-width="1.2"/></svg>
<div class="t" style="left:264px;top:505px;color:#9a9a9a">以含税价录入</div>
<div class="t" style="left:351px;top:505px;">发票类别</div>
<div class="" style="left:406px;top:502px;width:153px;height:20px;background:#f0f0f0;border:1px solid #d4d4d4"></div>
<div class="" style="left:542px;top:503px;width:16px;height:18px;background:#fff"></div>
<div class="t" style="left:410px;top:505px;color:#6d6d6d">增值税专用发票<span class="n u"><span class="p">|</span>13<span class="p">%</span></span></div>
<svg style="left:544px;top:510px" width="10" height="6" viewBox="0 0 10 6"><path d="M1 .8L5 4.8L9 .8" fill="none" stroke="#a8a8a8" stroke-width="1.1"/></svg>
<div class="t" style="left:563px;top:505px;">累计金额</div>
<div class="" style="left:618px;top:501px;width:97px;height:21px;background:#ffffe1;border:1px solid #7a7a7a;box-shadow:inset 1px 1px 0 #fff, inset -1px -1px 0 #fff"></div>
<div class="t n r" style="left:618px;top:505px;width:93px;">10000<span class="p">.</span>00</div>
<div class="t" style="left:721px;top:505px;">价税合计</div>
<div class="" style="left:774px;top:501px;width:89px;height:21px;background:#ffffe1;border:1px solid #7a7a7a;box-shadow:inset 1px 1px 0 #fff, inset -1px -1px 0 #fff"></div>
<div class="t n r" style="left:774px;top:505px;width:85px;">11300<span class="p">.</span>00</div>
<div class="t" style="left:869px;top:505px;">税额合计</div>
<div class="" style="left:922px;top:501px;width:89px;height:21px;background:#ffffe1;border:1px solid #7a7a7a;box-shadow:inset 1px 1px 0 #fff, inset -1px -1px 0 #fff"></div>
<div class="t n r" style="left:922px;top:505px;width:85px;">1300<span class="p">.</span>00</div>
<div class="btn" style="left:1016px;top:500px;width:178px;height:23px;"></div>
<svg style="left:1021px;top:503px" width="18" height="17" viewBox="0 0 18 17"><path d="M6 5L8.6 8L1.3 15.6Z" fill="#f8f8f8"/><path d="M8.6 8L11.3 11L1.3 15.6Z" fill="#a4a4a4"/><path d="M8 8.6L9.6 10.4M6 10.4L7.6 12.2" stroke="#707070" stroke-width=".7"/><path d="M1.1 15.8L2.6 13.4L3.9 14.7Z" fill="#000"/><path d="M10 .7L17.2 5.5L11.3 11L6 5Z" fill="#0838a8"/><path d="M7.6 5L11.6 1.9M8.8 6.2L12.9 3M10 7.4L14.2 4" stroke="#3c62cc" stroke-width=".5" fill="none"/><path d="M15.6 2L16.8 4.6" stroke="#c8c8c8" stroke-width="1"/></svg>
<div class="t" style="left:1044px;top:505px;">当前材料含税单价批量修改</div>
<div class="" style="left:2px;top:529px;width:1248px;height:172px;background:#c0ecce;border:1px solid #a0a0a0;border-top:0"></div>
<div class="" style="left:3px;top:529px;width:1244px;height:16px;background:#dcf1e2"></div>
<div class="" style="left:3px;top:545px;width:1244px;height:2px;background:#f2faf4"></div>
<div class="" style="left:99px;top:531px;width:1px;height:13px;background:#a8b4ac"></div>
<div class="" style="left:100px;top:530px;width:1px;height:15px;background:#fff"></div>
<div class="t c" style="left:3px;top:531px;width:96px;">工种</div>
<div class="" style="left:266px;top:531px;width:1px;height:13px;background:#a8b4ac"></div>
<div class="" style="left:267px;top:530px;width:1px;height:15px;background:#fff"></div>
<div class="t c" style="left:99px;top:531px;width:167px;">名称</div>
<div class="" style="left:338px;top:531px;width:1px;height:13px;background:#a8b4ac"></div>
<div class="" style="left:339px;top:530px;width:1px;height:15px;background:#fff"></div>
<div class="t c" style="left:266px;top:531px;width:72px;">规格</div>
<div class="" style="left:387px;top:531px;width:1px;height:13px;background:#a8b4ac"></div>
<div class="" style="left:388px;top:530px;width:1px;height:15px;background:#fff"></div>
<div class="t c" style="left:338px;top:531px;width:49px;">单位</div>
<div class="" style="left:460px;top:531px;width:1px;height:13px;background:#a8b4ac"></div>
<div class="" style="left:461px;top:530px;width:1px;height:15px;background:#fff"></div>
<div class="t c" style="left:387px;top:531px;width:73px;">品牌</div>
<div class="" style="left:525px;top:531px;width:1px;height:13px;background:#a8b4ac"></div>
<div class="" style="left:526px;top:530px;width:1px;height:15px;background:#fff"></div>
<div class="t c" style="left:460px;top:531px;width:65px;">标准</div>
<div class="" style="left:584px;top:531px;width:1px;height:13px;background:#a8b4ac"></div>
<div class="" style="left:585px;top:530px;width:1px;height:15px;background:#fff"></div>
<div class="t c" style="left:525px;top:531px;width:59px;">材质</div>
<div class="" style="left:642px;top:531px;width:1px;height:13px;background:#a8b4ac"></div>
<div class="" style="left:643px;top:530px;width:1px;height:15px;background:#fff"></div>
<div class="t c" style="left:584px;top:531px;width:58px;">数量</div>
<div class="" style="left:702px;top:531px;width:1px;height:13px;background:#a8b4ac"></div>
<div class="" style="left:703px;top:530px;width:1px;height:15px;background:#fff"></div>
<div class="t c" style="left:642px;top:531px;width:60px;">单价</div>
<div class="" style="left:769px;top:531px;width:1px;height:13px;background:#a8b4ac"></div>
<div class="" style="left:770px;top:530px;width:1px;height:15px;background:#fff"></div>
<div class="t c" style="left:702px;top:531px;width:67px;">含税单价</div>
<div class="" style="left:828px;top:531px;width:1px;height:13px;background:#a8b4ac"></div>
<div class="" style="left:829px;top:530px;width:1px;height:15px;background:#fff"></div>
<div class="t c" style="left:769px;top:531px;width:59px;">金额</div>
<div class="" style="left:885px;top:531px;width:1px;height:13px;background:#a8b4ac"></div>
<div class="" style="left:886px;top:530px;width:1px;height:15px;background:#fff"></div>
<div class="t c" style="left:828px;top:531px;width:57px;">含税金额</div>
<div class="" style="left:1025px;top:531px;width:1px;height:13px;background:#a8b4ac"></div>
<div class="" style="left:1026px;top:530px;width:1px;height:15px;background:#fff"></div>
<div class="t c" style="left:885px;top:531px;width:140px;">换算关系</div>
<div class="" style="left:1101px;top:531px;width:1px;height:13px;background:#a8b4ac"></div>
<div class="" style="left:1102px;top:530px;width:1px;height:15px;background:#fff"></div>
<div class="t c" style="left:1025px;top:531px;width:76px;">备注</div>
<div class="" style="left:1174px;top:531px;width:1px;height:13px;background:#a8b4ac"></div>
<div class="" style="left:1175px;top:530px;width:1px;height:15px;background:#fff"></div>
<div class="t c" style="left:1101px;top:531px;width:73px;">计划项目</div>
<div class="t c" style="left:1174px;top:531px;width:73px;">所用部位</div>
<div class="" style="left:21px;top:547px;width:1226px;height:16px;background:#0078d7"></div>
<div class="" style="left:21px;top:563px;width:1227px;height:1px;background:#a0a0a0"></div>
<div class="" style="left:99px;top:547px;width:1px;height:17px;background:#a0a0a0"></div>
<div class="" style="left:266px;top:547px;width:1px;height:17px;background:#a0a0a0"></div>
<div class="" style="left:338px;top:547px;width:1px;height:17px;background:#a0a0a0"></div>
<div class="" style="left:387px;top:547px;width:1px;height:17px;background:#a0a0a0"></div>
<div class="" style="left:460px;top:547px;width:1px;height:17px;background:#a0a0a0"></div>
<div class="" style="left:525px;top:547px;width:1px;height:17px;background:#a0a0a0"></div>
<div class="" style="left:584px;top:547px;width:1px;height:17px;background:#a0a0a0"></div>
<div class="" style="left:642px;top:547px;width:1px;height:17px;background:#a0a0a0"></div>
<div class="" style="left:702px;top:547px;width:1px;height:17px;background:#a0a0a0"></div>
<div class="" style="left:769px;top:547px;width:1px;height:17px;background:#a0a0a0"></div>
<div class="" style="left:828px;top:547px;width:1px;height:17px;background:#a0a0a0"></div>
<div class="" style="left:885px;top:547px;width:1px;height:17px;background:#a0a0a0"></div>
<div class="" style="left:1025px;top:547px;width:1px;height:17px;background:#a0a0a0"></div>
<div class="" style="left:1101px;top:547px;width:1px;height:17px;background:#a0a0a0"></div>
<div class="" style="left:1174px;top:547px;width:1px;height:17px;background:#a0a0a0"></div>
<div class="" style="left:1247px;top:547px;width:1px;height:17px;background:#a0a0a0"></div>
<div class="" style="left:21px;top:547px;width:1226px;height:16px;border:1px dotted #ff9020"></div>
<div class="t n c" style="left:20px;top:548px;width:78px;color:#e2ffd2;">01130204</div>
<div class="t c" style="left:99px;top:549px;width:167px;color:#e2ffd2;">混凝土</div>
<div class="t n c" style="left:266px;top:548px;width:72px;color:#e2ffd2;">C30</div>
<div class="t n c" style="left:338px;top:548px;width:49px;color:#e2ffd2;">t</div>
<div class="t n r" style="left:584px;top:548px;width:55px;color:#e2ffd2;">12</div>
<div class="t n r" style="left:642px;top:548px;width:57px;color:#e2ffd2;">200<span class="p">.</span>00</div>
<div class="t n r" style="left:702px;top:548px;width:64px;color:#e2ffd2;">226<span class="p">.</span>00</div>
<div class="t n r" style="left:769px;top:548px;width:56px;color:#e2ffd2;">2400<span class="p">.</span>00</div>
<div class="t n r" style="left:828px;top:548px;width:54px;color:#e2ffd2;">2712<span class="p">.</span>00</div>
<div class="" style="left:11px;top:554px;width:9px;height:1px;background:repeating-linear-gradient(to right,#a898a8 0,#a898a8 1px,transparent 1px,transparent 2px)"></div>
<div class="" style="left:21px;top:564px;width:1226px;height:16px;background:#ffffe1"></div>
<div class="" style="left:21px;top:580px;width:1227px;height:1px;background:#a0a0a0"></div>
<div class="" style="left:99px;top:564px;width:1px;height:17px;background:#a0a0a0"></div>
<div class="" style="left:266px;top:564px;width:1px;height:17px;background:#a0a0a0"></div>
<div class="" style="left:338px;top:564px;width:1px;height:17px;background:#a0a0a0"></div>
<div class="" style="left:387px;top:564px;width:1px;height:17px;background:#a0a0a0"></div>
<div class="" style="left:460px;top:564px;width:1px;height:17px;background:#a0a0a0"></div>
<div class="" style="left:525px;top:564px;width:1px;height:17px;background:#a0a0a0"></div>
<div class="" style="left:584px;top:564px;width:1px;height:17px;background:#a0a0a0"></div>
<div class="" style="left:642px;top:564px;width:1px;height:17px;background:#a0a0a0"></div>
<div class="" style="left:702px;top:564px;width:1px;height:17px;background:#a0a0a0"></div>
<div class="" style="left:769px;top:564px;width:1px;height:17px;background:#a0a0a0"></div>
<div class="" style="left:828px;top:564px;width:1px;height:17px;background:#a0a0a0"></div>
<div class="" style="left:885px;top:564px;width:1px;height:17px;background:#a0a0a0"></div>
<div class="" style="left:1025px;top:564px;width:1px;height:17px;background:#a0a0a0"></div>
<div class="" style="left:1101px;top:564px;width:1px;height:17px;background:#a0a0a0"></div>
<div class="" style="left:1174px;top:564px;width:1px;height:17px;background:#a0a0a0"></div>
<div class="" style="left:1247px;top:564px;width:1px;height:17px;background:#a0a0a0"></div>
<div class="t n c" style="left:20px;top:565px;width:78px;">01130204</div>
<div class="t c" style="left:99px;top:566px;width:167px;">混凝土</div>
<div class="t n c" style="left:266px;top:565px;width:72px;">C30</div>
<div class="t n c" style="left:338px;top:565px;width:49px;">t</div>
<div class="t n r" style="left:584px;top:565px;width:55px;">13</div>
<div class="t n r" style="left:642px;top:565px;width:57px;">200<span class="p">.</span>00</div>
<div class="t n r" style="left:702px;top:565px;width:64px;">226<span class="p">.</span>00</div>
<div class="t n r" style="left:769px;top:565px;width:56px;">2600<span class="p">.</span>00</div>
<div class="t n r" style="left:828px;top:565px;width:54px;">2938<span class="p">.</span>00</div>
<div class="" style="left:11px;top:571px;width:9px;height:1px;background:repeating-linear-gradient(to right,#a898a8 0,#a898a8 1px,transparent 1px,transparent 2px)"></div>
<div class="" style="left:21px;top:581px;width:1226px;height:16px;background:#ffffe1"></div>
<div class="" style="left:21px;top:597px;width:1227px;height:1px;background:#a0a0a0"></div>
<div class="" style="left:99px;top:581px;width:1px;height:17px;background:#a0a0a0"></div>
<div class="" style="left:266px;top:581px;width:1px;height:17px;background:#a0a0a0"></div>
<div class="" style="left:338px;top:581px;width:1px;height:17px;background:#a0a0a0"></div>
<div class="" style="left:387px;top:581px;width:1px;height:17px;background:#a0a0a0"></div>
<div class="" style="left:460px;top:581px;width:1px;height:17px;background:#a0a0a0"></div>
<div class="" style="left:525px;top:581px;width:1px;height:17px;background:#a0a0a0"></div>
<div class="" style="left:584px;top:581px;width:1px;height:17px;background:#a0a0a0"></div>
<div class="" style="left:642px;top:581px;width:1px;height:17px;background:#a0a0a0"></div>
<div class="" style="left:702px;top:581px;width:1px;height:17px;background:#a0a0a0"></div>
<div class="" style="left:769px;top:581px;width:1px;height:17px;background:#a0a0a0"></div>
<div class="" style="left:828px;top:581px;width:1px;height:17px;background:#a0a0a0"></div>
<div class="" style="left:885px;top:581px;width:1px;height:17px;background:#a0a0a0"></div>
<div class="" style="left:1025px;top:581px;width:1px;height:17px;background:#a0a0a0"></div>
<div class="" style="left:1101px;top:581px;width:1px;height:17px;background:#a0a0a0"></div>
<div class="" style="left:1174px;top:581px;width:1px;height:17px;background:#a0a0a0"></div>
<div class="" style="left:1247px;top:581px;width:1px;height:17px;background:#a0a0a0"></div>
<div class="t n c" style="left:20px;top:582px;width:78px;">01130204</div>
<div class="t c" style="left:99px;top:583px;width:167px;">混凝土</div>
<div class="t n c" style="left:266px;top:582px;width:72px;">C30</div>
<div class="t n c" style="left:338px;top:582px;width:49px;">t</div>
<div class="t n r" style="left:584px;top:582px;width:55px;">12</div>
<div class="t n r" style="left:642px;top:582px;width:57px;">200<span class="p">.</span>00</div>
<div class="t n r" style="left:702px;top:582px;width:64px;">226<span class="p">.</span>00</div>
<div class="t n r" style="left:769px;top:582px;width:56px;">2400<span class="p">.</span>00</div>
<div class="t n r" style="left:828px;top:582px;width:54px;">2712<span class="p">.</span>00</div>
<div class="" style="left:11px;top:588px;width:9px;height:1px;background:repeating-linear-gradient(to right,#a898a8 0,#a898a8 1px,transparent 1px,transparent 2px)"></div>
<div class="" style="left:21px;top:598px;width:1226px;height:16px;background:#ffffe1"></div>
<div class="" style="left:21px;top:614px;width:1227px;height:1px;background:#a0a0a0"></div>
<div class="" style="left:99px;top:598px;width:1px;height:17px;background:#a0a0a0"></div>
<div class="" style="left:266px;top:598px;width:1px;height:17px;background:#a0a0a0"></div>
<div class="" style="left:338px;top:598px;width:1px;height:17px;background:#a0a0a0"></div>
<div class="" style="left:387px;top:598px;width:1px;height:17px;background:#a0a0a0"></div>
<div class="" style="left:460px;top:598px;width:1px;height:17px;background:#a0a0a0"></div>
<div class="" style="left:525px;top:598px;width:1px;height:17px;background:#a0a0a0"></div>
<div class="" style="left:584px;top:598px;width:1px;height:17px;background:#a0a0a0"></div>
<div class="" style="left:642px;top:598px;width:1px;height:17px;background:#a0a0a0"></div>
<div class="" style="left:702px;top:598px;width:1px;height:17px;background:#a0a0a0"></div>
<div class="" style="left:769px;top:598px;width:1px;height:17px;background:#a0a0a0"></div>
<div class="" style="left:828px;top:598px;width:1px;height:17px;background:#a0a0a0"></div>
<div class="" style="left:885px;top:598px;width:1px;height:17px;background:#a0a0a0"></div>
<div class="" style="left:1025px;top:598px;width:1px;height:17px;background:#a0a0a0"></div>
<div class="" style="left:1101px;top:598px;width:1px;height:17px;background:#a0a0a0"></div>
<div class="" style="left:1174px;top:598px;width:1px;height:17px;background:#a0a0a0"></div>
<div class="" style="left:1247px;top:598px;width:1px;height:17px;background:#a0a0a0"></div>
<div class="t n c" style="left:20px;top:599px;width:78px;">01130204</div>
<div class="t c" style="left:99px;top:600px;width:167px;">混凝土</div>
<div class="t n c" style="left:266px;top:599px;width:72px;">C30</div>
<div class="t n c" style="left:338px;top:599px;width:49px;">t</div>
<div class="t n r" style="left:584px;top:599px;width:55px;">13</div>
<div class="t n r" style="left:642px;top:599px;width:57px;">200<span class="p">.</span>00</div>
<div class="t n r" style="left:702px;top:599px;width:64px;">226<span class="p">.</span>00</div>
<div class="t n r" style="left:769px;top:599px;width:56px;">2600<span class="p">.</span>00</div>
<div class="t n r" style="left:828px;top:599px;width:54px;">2938<span class="p">.</span>00</div>
<div class="" style="left:11px;top:605px;width:9px;height:1px;background:repeating-linear-gradient(to right,#a898a8 0,#a898a8 1px,transparent 1px,transparent 2px)"></div>
<div class="" style="left:11px;top:554px;width:1px;height:52px;background:repeating-linear-gradient(to bottom,#a898a8 0,#a898a8 1px,transparent 1px,transparent 2px)"></div>
<div class="" style="left:3px;top:614px;width:1245px;height:1px;background:#a0a0a0"></div>
<div class="" style="left:20px;top:547px;width:1px;height:67px;background:#a0a0a0"></div>
<div class="" style="left:0px;top:699px;width:1252px;height:1px;background:#949494"></div>
<div class="" style="left:0px;top:700px;width:1252px;height:1px;background:#fff"></div>
<div class="" style="left:0px;top:701px;width:1252px;height:19px;background:linear-gradient(to bottom,#9ebcea 0,#c3d6f4 50%,#e8f0fc 100%)"></div>
<div class="" style="left:1246px;top:707px;width:2px;height:2px;background:#fff"></div>
<div class="" style="left:1245px;top:706px;width:2px;height:2px;background:#8cb0e8"></div>
<div class="" style="left:1242px;top:711px;width:2px;height:2px;background:#fff"></div>
<div class="" style="left:1241px;top:710px;width:2px;height:2px;background:#8cb0e8"></div>
<div class="" style="left:1246px;top:711px;width:2px;height:2px;background:#fff"></div>
<div class="" style="left:1245px;top:710px;width:2px;height:2px;background:#8cb0e8"></div>
<div class="" style="left:1238px;top:715px;width:2px;height:2px;background:#fff"></div>
<div class="" style="left:1237px;top:714px;width:2px;height:2px;background:#8cb0e8"></div>
<div class="" style="left:1242px;top:715px;width:2px;height:2px;background:#fff"></div>
<div class="" style="left:1241px;top:714px;width:2px;height:2px;background:#8cb0e8"></div>
<div class="" style="left:1246px;top:715px;width:2px;height:2px;background:#fff"></div>
<div class="" style="left:1245px;top:714px;width:2px;height:2px;background:#8cb0e8"></div>
<div class="" style="left:75px;top:703px;width:1px;height:14px;background:#9bb6e6"></div>
<div class="" style="left:76px;top:703px;width:1px;height:14px;background:#eef4fd"></div>
<div class="" style="left:263px;top:703px;width:1px;height:14px;background:#9bb6e6"></div>
<div class="" style="left:264px;top:703px;width:1px;height:14px;background:#eef4fd"></div>
<div class="" style="left:363px;top:703px;width:1px;height:14px;background:#9bb6e6"></div>
<div class="" style="left:364px;top:703px;width:1px;height:14px;background:#eef4fd"></div>
<div class="" style="left:511px;top:703px;width:1px;height:14px;background:#9bb6e6"></div>
<div class="" style="left:512px;top:703px;width:1px;height:14px;background:#eef4fd"></div>
<div class="" style="left:659px;top:703px;width:1px;height:14px;background:#9bb6e6"></div>
<div class="" style="left:660px;top:703px;width:1px;height:14px;background:#eef4fd"></div>
<div class="" style="left:719px;top:703px;width:1px;height:14px;background:#9bb6e6"></div>
<div class="" style="left:720px;top:703px;width:1px;height:14px;background:#eef4fd"></div>
<div class="" style="left:787px;top:703px;width:1px;height:14px;background:#9bb6e6"></div>
<div class="" style="left:788px;top:703px;width:1px;height:14px;background:#eef4fd"></div>
<div class="" style="left:871px;top:703px;width:1px;height:14px;background:#9bb6e6"></div>
<div class="" style="left:872px;top:703px;width:1px;height:14px;background:#eef4fd"></div>
<div class="" style="left:955px;top:703px;width:1px;height:14px;background:#9bb6e6"></div>
<div class="" style="left:956px;top:703px;width:1px;height:14px;background:#eef4fd"></div>
<div class="" style="left:1071px;top:703px;width:1px;height:14px;background:#9bb6e6"></div>
<div class="" style="left:1072px;top:703px;width:1px;height:14px;background:#eef4fd"></div>
<div class="t" style="left:13px;top:704px;">超级用户</div>
<div class="t" style="left:150px;top:704px;">总公司</div>
<div class="t n" style="left:367px;top:703px;">127<span class="p">.</span>0<span class="p">.</span>0<span class="p">.</span>1<span class="p">,</span>1743</div>
<div class="t n" style="left:545px;top:703px;"><span class="p">j</span><span class="p">z</span><span class="p">g</span><span class="p">d</span><span class="p">g</span><span class="p">l</span><span class="p">_</span><span class="p">t</span><span class="p">u</span><span class="p">j</span><span class="p">i</span><span class="p">a</span><span class="p">n</span></div>
<div class="" style="left:725px;top:704px;color:#0000c8;height:12px;line-height:14px;border-bottom:1px solid #0000c8">待审<span class="n u">263</span>个</div>
<div class="" style="left:795px;top:704px;color:#0000c8;height:12px;line-height:14px;border-bottom:1px solid #0000c8">未看公告<span class="n u">4</span>个</div>
<div class="" style="left:879px;top:704px;color:#0000c8;height:12px;line-height:14px;border-bottom:1px solid #0000c8">未办提醒<span class="n u">7</span>个</div>
<div class="" style="left:959px;top:704px;color:#0000c8;height:12px;line-height:14px;border-bottom:1px solid #0000c8">证件<span class="n u">3</span>个<span class="n u"><span class="p">;</span></span>押金<span class="n u">2</span>个<span class="n u"><span class="p">;</span></span></div>
<div class="" style="left:0px;top:0px;width:1252px;height:1px;background:#585858"></div>
<div class="" style="left:0px;top:0px;width:1px;height:721px;background:#585858"></div>
<div class="" style="left:1px;top:72px;width:1px;height:628px;background:#a0a0a0"></div>
<div class="" style="left:1250px;top:189px;width:1px;height:511px;background:#fff"></div>
<div class="" style="left:1251px;top:0px;width:1px;height:721px;background:#585858"></div>
<div class="" style="left:0px;top:720px;width:1252px;height:1px;background:#585858"></div>
<div class="" style="left:21px;top:494px;width:68px;height:40px;border:3px solid #e81e25"></div>
<div class="" style="left:1018px;top:488px;width:174px;height:41px;border:3px solid #e81e25"></div>
<svg style="left:68px;top:455.3px;overflow:visible" width="120" height="40" viewBox="0 0 120 40"><g font-family="Liberation Sans, Noto Sans CJK SC, sans-serif" font-size="26" font-weight="bold" letter-spacing="-.5"><text x="8" y="30" fill="#e81e25" stroke="#fff" stroke-width="5.6" stroke-linejoin="round" paint-order="stroke fill">单个修改</text></g></svg>
<svg style="left:1059px;top:464.2px;overflow:visible" width="120" height="40" viewBox="0 0 120 40"><g font-family="Liberation Sans, Noto Sans CJK SC, sans-serif" font-size="26" font-weight="bold" letter-spacing="-.5"><text x="8" y="30" fill="#e81e25" stroke="#fff" stroke-width="5.6" stroke-linejoin="round" paint-order="stroke fill">批量修改</text></g></svg>
</body></html>
